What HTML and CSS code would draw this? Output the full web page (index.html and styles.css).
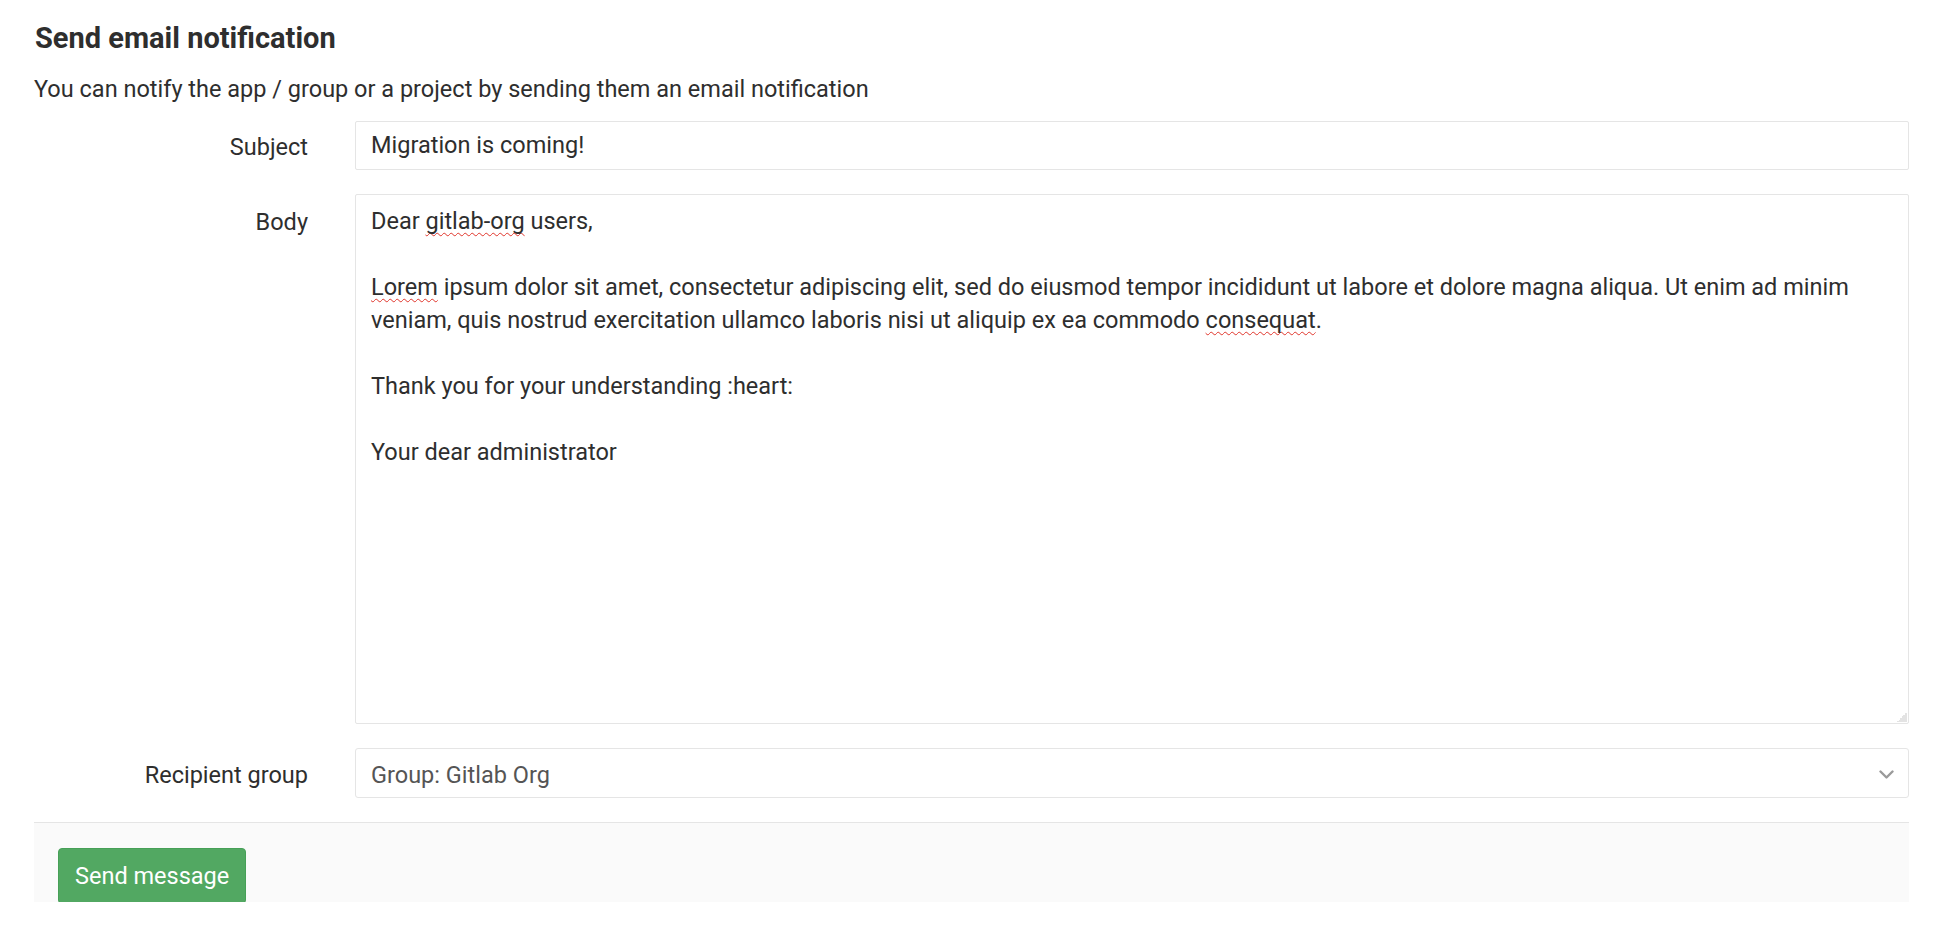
FILE: index.html
```html
<!DOCTYPE html>
<html lang="en">
<head>
<meta charset="utf-8">
<title>Send email notification</title>
<link rel="stylesheet" href="styles.css">
</head>
<body>
<div class="page">
  <h4 class="title">Send email notification</h4>
  <p class="desc">You can notify the app / group or a project by sending them an email notification</p>
  <form class="form">
    <div class="form-group">
      <label class="label">Subject</label>
      <div class="input">Migration is coming!</div>
    </div>
    <div class="form-group">
      <label class="label label-body">Body</label>
      <div class="textarea">
        <p class="ta-line">Dear <span class="typo">gitlab-org</span> users,</p>
        <p class="ta-line">&nbsp;</p>
        <p class="ta-line"><span class="typo">Lorem</span> ipsum dolor sit amet, consectetur adipiscing elit, sed do eiusmod tempor incididunt ut labore et dolore magna aliqua. Ut enim ad minim veniam, quis nostrud exercitation ullamco laboris nisi ut aliquip ex ea commodo <span class="typo">consequat</span>.</p>
        <p class="ta-line">&nbsp;</p>
        <p class="ta-line">Thank you for your understanding :heart:</p>
        <p class="ta-line">&nbsp;</p>
        <p class="ta-line">Your dear administrator</p>
        <span class="grip"></span>
      </div>
    </div>
    <div class="form-group">
      <label class="label label-select">Recipient group</label>
      <div class="select">
        <span class="select-text">Group: Gitlab Org</span>
        <svg class="chevron" width="15" height="10" viewBox="0 0 15 10"><polyline points="1.5,1.5 7.5,7.5 13.5,1.5" fill="none" stroke="#9a9a9a" stroke-width="2.4" stroke-linecap="round" stroke-linejoin="round"/></svg>
      </div>
    </div>
    <div class="form-actions">
      <button type="button" class="btn-success">Send message</button>
    </div>
  </form>
</div>
</body>
</html>
```

FILE: styles.css
```css
html, body {
  margin: 0;
  padding: 0;
  background: #ffffff;
}

body {
  font-family: Roboto, "Liberation Sans", Arial, sans-serif;
  font-size: 23.5px;
  line-height: 33px;
  color: #2e2e2e;
}

.page {
  padding: 22px 25px 0 34px;
  height: 906px;
}

.title {
  margin: 0 0 19px 1px;
  font-size: 29px;
  line-height: 32px;
  font-weight: 700;
  color: #2e2e2e;
}

.desc {
  margin: 0 0 15px 0;
}

.form {
  margin: 0;
}

.form-group {
  display: grid;
  grid-template-columns: 274px 1fr;
  column-gap: 47px;
  margin-bottom: 24px;
}

.label {
  text-align: right;
  padding-top: 10px;
  color: #2e2e2e;
}

.label-body {
  padding-top: 12px;
}

.label-select {
  padding-top: 11px;
}

.input {
  height: 33px;
  padding: 7px 15px 7px 15px;
  border: 1px solid #e5e5e5;
  border-radius: 2px;
  color: #2e2e2e;
  background: #fff;
}

.textarea {
  position: relative;
  height: 508px;
  padding: 10px 15px 10px 15px;
  border: 1px solid #e5e5e5;
  border-radius: 2px;
  background: #fff;
  overflow: hidden;
}

.ta-line {
  margin: 0;
}

.typo {
  text-decoration: underline wavy #e0352b;
  text-decoration-thickness: 1px;
  text-underline-offset: 3px;
  text-decoration-skip-ink: none;
}

.grip {
  position: absolute;
  right: 1px;
  bottom: 1px;
  width: 10px;
  height: 10px;
  background: linear-gradient(135deg, transparent 0 50%, #e3e3e3 50% 100%);
}

.select {
  display: flex;
  align-items: center;
  justify-content: space-between;
  height: 34px;
  padding: 9px 14px 5px 15px;
  border: 1px solid #e5e5e5;
  border-radius: 3px;
  background: #fff;
  color: #555555;
}

.chevron {
  display: block;
  margin-top: 0;
}

.form-actions {
  height: 54px;
  padding: 25px 0 0 24px;
  border-top: 1px solid #e5e5e5;
  background: #fafafa;
  overflow: hidden;
}

.btn-success {
  display: block;
  height: 56px;
  padding: 0 16px;
  margin: 0;
  font-family: Roboto, "Liberation Sans", Arial, sans-serif;
  font-size: 23.5px;
  line-height: 33px;
  color: #ffffff;
  background: #52a862;
  border: 1px solid #46a057;
  border-radius: 4px;
  cursor: pointer;
}
```
